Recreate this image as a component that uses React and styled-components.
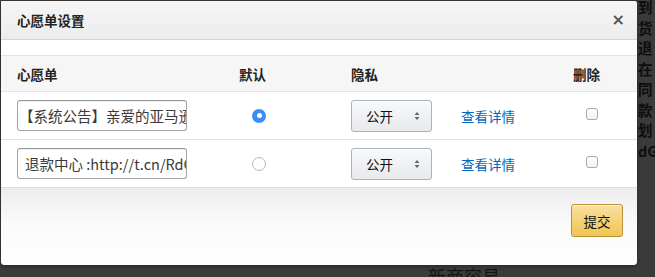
import React from "react";
import styled, { createGlobalStyle } from "styled-components";

const Global = createGlobalStyle`
  html, body { margin: 0; padding: 0; }
  body {
    background: #3b3b3b;
    font-family: "Liberation Sans", Arial, "Noto Sans CJK SC", sans-serif;
    overflow: hidden;
  }
`;

const Page = styled.div`
  position: relative;
  width: 655px;
  height: 277px;
  overflow: hidden;
  background: #3b3b3b;
`;

const BehindColumn = styled.div`
  position: absolute;
  left: 638px;
  top: 0px;
  display: flex;
  flex-direction: column;
  gap: 6px;
  font-size: 14.5px;
  line-height: 14.5px;
  color: #0e0e0e;
  font-weight: bold;
  font-family: "Noto Sans CJK SC", sans-serif;
`;

const BehindTitle = styled.div`
  position: absolute;
  left: 428px;
  top: 266px;
  font-size: 18px;
  line-height: 20px;
  color: #141414;
  font-family: "Noto Sans CJK SC", sans-serif;
`;

const Modal = styled.div`
  position: absolute;
  left: 1px;
  top: 1px;
  width: 636px;
  height: 264px;
  background: #fff;
  border-radius: 0 3px 4px 4px;
  box-shadow: 0 1px 4px rgba(0, 0, 0, 0.4);
  display: flex;
  flex-direction: column;
  overflow: hidden;
`;

const Header = styled.div`
  height: 38px;
  flex: none;
  display: flex;
  align-items: center;
  justify-content: space-between;
  padding: 0 12px 0 16px;
  background: linear-gradient(#f6f6f6, #ececec);
  border-bottom: 1px solid #d5d5d5;
  font-family: "Noto Sans CJK SC", sans-serif;
`;

const Title = styled.div`
  font-size: 13.5px;
  font-weight: bold;
  color: #222;
  margin-top: -1px;
`;

const Close = styled.div`
  font-size: 16px;
  font-weight: bold;
  color: #555;
  font-family: "DejaVu Sans", sans-serif;
  line-height: 1;
`;

const Body = styled.div`
  padding-top: 15px;
  flex: none;
`;

const Row = styled.div`
  display: grid;
  grid-template-columns: 222px 112px 110px 112px 1fr;
  align-items: center;
  padding-left: 16px;
  height: ${(p) => (p.$head ? "35px" : "47px")};
  background: ${(p) => (p.$head ? "#f6f6f6" : "#fff")};
  border-top: 1px solid #e3e3e3;
  font-family: "Noto Sans CJK SC", sans-serif;
`;

const HeadCell = styled.div`
  font-size: 13.5px;
  font-weight: bold;
  color: #222;
`;

const Cell = styled.div`
  display: flex;
  align-items: center;
  padding-left: ${(p) => p.$pad || 0}px;
`;

const TextInput = styled.div`
  width: 170px;
  height: 31px;
  box-sizing: border-box;
  border: 1px solid #a6a6a6;
  border-top-color: #949494;
  border-radius: 3px;
  box-shadow: inset 0 1px 0 rgba(0,0,0,0.05);
  display: flex;
  align-items: center;
  padding-left: ${(p) => p.$pl}px;
  font-size: 14.5px;
  color: #3a3a3a;
  white-space: nowrap;
  overflow: hidden;
`;

const Radio = styled.div`
  width: 14px;
  height: 14px;
  box-sizing: border-box;
  border-radius: 50%;
  border: ${(p) => (p.$on ? "none" : "1px solid #b5b5b5")};
  background: ${(p) => (p.$on ? "#3b8ff0" : "#fff")};
  display: flex;
  align-items: center;
  justify-content: center;
  &::after {
    content: "";
    display: ${(p) => (p.$on ? "block" : "none")};
    width: 5px;
    height: 5px;
    border-radius: 50%;
    background: #fff;
  }
`;

const Select = styled.div`
  width: 81px;
  height: 32px;
  box-sizing: border-box;
  border: 1px solid #adb1b8;
  border-radius: 3px;
  background: linear-gradient(#f7f8fa, #e7e9ec);
  box-shadow: 0 1px 0 rgba(255,255,255,0.6) inset;
  display: flex;
  align-items: center;
  justify-content: space-between;
  padding: 0 11px 0 14px;
  font-size: 13.5px;
  color: #111;
`;

const Arrows = styled.svg`
  width: 6px;
  height: 10px;
`;

const Link = styled.a`
  color: #0066c0;
  font-size: 13.5px;
  text-decoration: none;
`;

const Check = styled.div`
  width: 12px;
  height: 12px;
  box-sizing: border-box;
  border: 1px solid #a8a8a8;
  border-radius: 3px;
  background: linear-gradient(#fff, #f3f3f3);
  margin-top: -3px;
`;

const Footer = styled.div`
  flex: 1;
  border-top: 1px solid #dcdcdc;
  background: linear-gradient(#ededed, #fafafa 45%, #fff);
  display: flex;
  justify-content: flex-end;
  align-items: flex-start;
  padding: 16px 14px 0 0;
`;

const Submit = styled.button`
  width: 52px;
  height: 33px;
  box-sizing: border-box;
  border: 1px solid #b89235;
  border-radius: 3px;
  background: linear-gradient(#f8e0a3, #f1c550);
  font-family: "Noto Sans CJK SC", sans-serif;
  font-size: 13.5px;
  color: #111;
  padding: 0;
  box-shadow: inset 0 1px 0 rgba(255,255,255,0.5);
`;

const rows = [
  { text: "【系统公告】亲爱的亚马逊用户", pl: 1, on: true },
  { text: "退款中心 :http://t.cn/RdGx", pl: 7, on: false },
];

export default function App() {
  return (
    <>
      <Global />
      <Page>
        <BehindColumn>
          {["到", "货", "退", "在", "同", "款", "划", "dG"].map((c, i) => (
            <span key={i}>{c}</span>
          ))}
        </BehindColumn>
        <BehindTitle>新商容易</BehindTitle>
        <Modal>
          <Header>
            <Title>心愿单设置</Title>
            <Close>×</Close>
          </Header>
          <Body>
            <Row $head>
              <HeadCell>心愿单</HeadCell>
              <HeadCell>默认</HeadCell>
              <HeadCell>隐私</HeadCell>
              <HeadCell />
              <HeadCell>删除</HeadCell>
            </Row>
            {rows.map((r, i) => (
              <Row key={i}>
                <Cell>
                  <TextInput $pl={r.pl}>{r.text}</TextInput>
                </Cell>
                <Cell $pad={13}>
                  <Radio $on={r.on} />
                </Cell>
                <Cell>
                  <Select>
                    <span>公开</span>
                    <Arrows viewBox="0 0 6 10">
                      <path d="M3 1 L5.5 4 H0.5 Z M3 9 L5.5 6 H0.5 Z" fill="#666" />
                    </Arrows>
                  </Select>
                </Cell>
                <Cell>
                  <Link href="#">查看详情</Link>
                </Cell>
                <Cell $pad={13}>
                  <Check />
                </Cell>
              </Row>
            ))}
          </Body>
          <Footer>
            <Submit>提交</Submit>
          </Footer>
        </Modal>
      </Page>
    </>
  );
}
